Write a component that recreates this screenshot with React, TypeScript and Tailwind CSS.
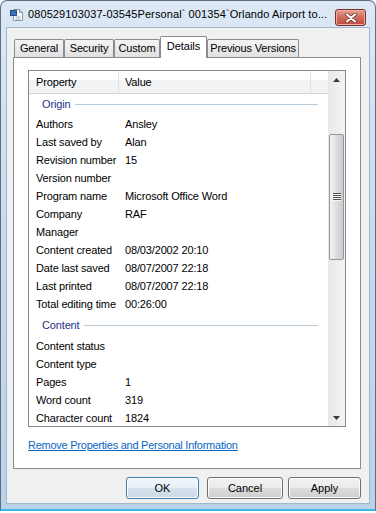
import React from "react";

const origin: [string, string][] = [
  ["Authors", "Ansley"],
  ["Last saved by", "Alan"],
  ["Revision number", "15"],
  ["Version number", ""],
  ["Program name", "Microsoft Office Word"],
  ["Company", "RAF"],
  ["Manager", ""],
  ["Content created", "08/03/2002 20:10"],
  ["Date last saved", "08/07/2007 22:18"],
  ["Last printed", "08/07/2007 22:18"],
  ["Total editing time", "00:26:00"],
];

const content: [string, string][] = [
  ["Content status", ""],
  ["Content type", ""],
  ["Pages", "1"],
  ["Word count", "319"],
  ["Character count", "1824"],
];

const tabs = [
  { label: "General", w: "w-[50px]" },
  { label: "Security", w: "w-[50px]" },
  { label: "Custom", w: "w-[46px]" },
  { label: "Details", w: "w-[47px]", active: true },
  { label: "Previous Versions", w: "w-[92px]" },
];

const Row = ({ label, value }: { label: string; value: string }) => (
  <div className="flex h-[18px] shrink-0 items-center whitespace-nowrap">
    <span className="w-[96px] shrink-0 pl-[7px]">{label}</span>
    <span>{value}</span>
  </div>
);

const Group = ({ label, h }: { label: string; h: string }) => (
  <div className={`flex ${h} shrink-0 items-center pl-[13px] pr-[10px] text-[#1e3287]`}>
    <span>{label}</span>
    <div className="ml-[5px] h-px flex-1 bg-[#b9cad9]" />
  </div>
);

const DocIcon = () => (
  <svg width="14" height="14" viewBox="0 0 14 14">
    <path d="M3.5 1.5h6l3 3v8h-9z" fill="#fff" stroke="#8a96a6" />
    <path d="M9.5 1.5v3h3" fill="none" stroke="#8a96a6" />
    <rect x="0.5" y="2.5" width="6" height="5" fill="#3b6fb8" stroke="#264f8c" />
    <path d="M5.5 9h5M5.5 11h5" stroke="#9aa6b4" />
  </svg>
);

const CloseX = () => (
  <svg width="12" height="10" viewBox="0 0 12 10">
    <path d="M2 1.5l8 7M10 1.5l-8 7" stroke="#6b2420" strokeWidth="3.6" strokeLinecap="round" />
    <path d="M2 1.5l8 7M10 1.5l-8 7" stroke="#fff" strokeWidth="2.2" strokeLinecap="round" />
  </svg>
);

const Button = ({ label, w, primary }: { label: string; w: string; primary?: boolean }) => (
  <button
    className={`${w} flex h-[22px] items-center justify-center rounded-[3px] border text-[11px] text-black shadow-[inset_0_0_0_1px_#fbfbfb] ${
      primary
        ? "border-[#3c7fb1] bg-[linear-gradient(#f1f7fb_0%,#e6eff6_50%,#d6e3ee_50%,#cbd9e6_100%)]"
        : "border-[#707070] bg-[linear-gradient(#f2f2f2_0%,#ebebeb_50%,#dddddd_50%,#cfcfcf_100%)]"
    }`}
  >
    {label}
  </button>
);

export default function App() {
  return (
    <div className="h-[513px] w-[376px] bg-white font-['Liberation_Sans',Arial,sans-serif] text-[11px] text-black">
      <div className="flex h-[511px] flex-col rounded-t-[7px] border border-b-2 border-[#5e6f82] border-b-[#3fb6e6] bg-linear-to-b from-[#dde8f5] via-[#c6daee] to-[#bad2ea]">
        {/* title bar */}
        <div className="flex h-[27px] shrink-0 items-center pl-[9px] pr-[9px]">
          <DocIcon />
          <span className="ml-[4px] whitespace-nowrap tracking-[0.1px]">
            080529103037-03545Personal` 001354`Orlando Airport to...
          </span>
          <div className="ml-auto mt-[8px] flex h-[17px] w-[31px] shrink-0 items-center justify-center self-start rounded-[3px] border border-[#7a302a] bg-linear-to-b from-[#e3a193] via-[#cf6a5c] to-[#c04a3a] shadow-[inset_0_0_0_1px_#eab0a4]">
            <CloseX />
          </div>
        </div>

        {/* client area */}
        <div className="mx-[6px] flex h-[475px] shrink-0 flex-col bg-[#f0f0f0] shadow-[0_0_0_1px_#a3b7cc]">
          {/* tabs */}
          <div className="mt-[8px] flex h-[21px] items-end pl-[7px]">
            {tabs.map((t) =>
              t.active ? (
                <div
                  key={t.label}
                  className={`${t.w} relative z-10 -mb-px flex h-[22px] items-center justify-center rounded-t-[2px] border border-b-0 border-[#898c95] bg-white pb-[3px]`}
                >
                  {t.label}
                </div>
              ) : (
                <div
                  key={t.label}
                  className={`${t.w} flex h-[18px] items-center justify-center rounded-t-[2px] border border-b-0 border-[#898c95] bg-linear-to-b from-[#f4f4f4] to-[#e1e1e1] tracking-[-0.15px]`}
                >
                  {t.label}
                </div>
              )
            )}
          </div>

          {/* tab page */}
          <div className="ml-[6px] flex h-[412px] w-[348px] flex-col border border-[#898c95] bg-white px-[14px] pt-[12px] tracking-[-0.15px]">
            <div className="flex h-[357px] shrink-0 border border-[#828790]">
              <div className="flex min-w-0 flex-1 flex-col overflow-hidden">
                {/* header */}
                <div className="flex h-[23px] shrink-0 border-b border-[#d5d5d5] bg-[linear-gradient(#ffffff_0%,#ffffff_42%,#f2f3f5_42%,#f2f3f5_100%)]">
                  <div className="flex w-[90px] items-center border-r border-[#e2e3e5] pl-[7px]">Property</div>
                  <div className="flex w-[192px] items-center border-r border-[#e2e3e5] pl-[6px]">Value</div>
                </div>
                <Group label="Origin" h="h-[21px]" />
                {origin.map(([l, v]) => (
                  <Row key={l} label={l} value={v} />
                ))}
                <Group label="Content" h="h-[24px]" />
                {content.map(([l, v]) => (
                  <Row key={l} label={l} value={v} />
                ))}
              </div>

              {/* scrollbar */}
              <div className="flex w-[17px] shrink-0 flex-col bg-linear-to-r from-[#e8e8e8] to-[#f4f4f4]">
                <div className="flex h-[17px] shrink-0 items-center justify-center">
                  <svg width="7" height="4" viewBox="0 0 7 4">
                    <path d="M3.5 0L7 4H0z" fill="#3a3a3a" />
                  </svg>
                </div>
                <div className="h-[46px] shrink-0" />
                <div className="mx-px flex h-[126px] shrink-0 items-center justify-center rounded-[2px] border border-[#979797] bg-linear-to-r from-[#f3f3f3] via-[#dedee0] to-[#c9cbd1]">
                  <svg width="8" height="8" viewBox="0 0 8 8">
                    <path d="M0 0.5h8M0 2.5h8M0 4.5h8M0 6.5h8" stroke="#555" />
                    <path d="M0 1.5h8M0 3.5h8M0 5.5h8M0 7.5h8" stroke="#f6f6f6" />
                  </svg>
                </div>
                <div className="flex-1" />
                <div className="flex h-[17px] shrink-0 items-center justify-center">
                  <svg width="7" height="4" viewBox="0 0 7 4">
                    <path d="M0 0H7L3.5 4z" fill="#3a3a3a" />
                  </svg>
                </div>
              </div>
            </div>

            <div className="mt-[12px] leading-[13px] tracking-[-0.25px]">
              <span className="text-[#0a66c2] underline">Remove Properties and Personal Information</span>
            </div>
          </div>

          {/* buttons */}
          <div className="mt-[8px] flex pl-[119px]">
            <Button label="OK" w="w-[73px]" primary />
            <div className="w-[8px]" />
            <Button label="Cancel" w="w-[76px]" />
            <div className="w-[5px]" />
            <Button label="Apply" w="w-[73px]" />
          </div>
        </div>
      </div>
    </div>
  );
}
